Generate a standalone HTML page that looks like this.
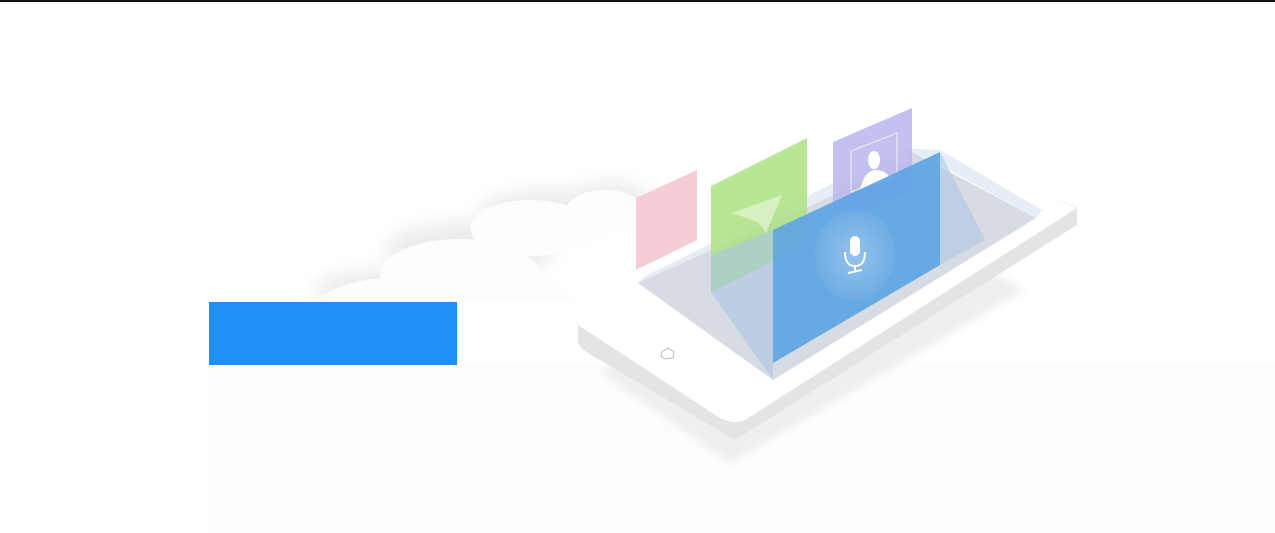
<!DOCTYPE html>
<html><head><meta charset="utf-8"><style>
html,body{margin:0;padding:0;width:1275px;height:533px;overflow:hidden;background:#fff;font-family:"Liberation Sans",sans-serif}
</style></head><body>
<svg width="1275" height="533" viewBox="0 0 1275 533" xmlns="http://www.w3.org/2000/svg" style="display:block">
<defs>
<filter id="blur8" x="-50%" y="-50%" width="200%" height="200%"><feGaussianBlur stdDeviation="9"/></filter>
<filter id="blur4" x="-50%" y="-50%" width="200%" height="200%"><feGaussianBlur stdDeviation="4"/></filter>
<radialGradient id="glow" cx="0.5" cy="0.5" r="0.5"><stop offset="0" stop-color="#fff" stop-opacity="0.3"/><stop offset="1" stop-color="#fff" stop-opacity="0.05"/></radialGradient>
</defs>
<rect x="0" y="0" width="1275" height="2" fill="#111"/>
<rect x="208" y="365" width="1067" height="168" fill="#fdfdfd"/>
<!-- clouds shadow -->
<g filter="url(#blur8)" fill="#ececec">
<ellipse cx="545" cy="212" rx="65" ry="22"/>
<ellipse cx="470" cy="250" rx="85" ry="28"/>
<ellipse cx="390" cy="290" rx="75" ry="20"/>
<ellipse cx="610" cy="198" rx="40" ry="16"/>
</g>
<g fill="#fdfdfd">
<ellipse cx="530" cy="228" rx="60" ry="28"/>
<ellipse cx="605" cy="212" rx="40" ry="22"/>
<ellipse cx="460" cy="275" rx="80" ry="36"/>
<ellipse cx="395" cy="312" rx="82" ry="34"/>
<ellipse cx="530" cy="312" rx="50" ry="32"/>
</g>
<rect x="300" y="300" width="300" height="65" fill="#fff"/>
<!-- phone shadow -->
<polygon points="600,372 730,463 1025,290 900,220" fill="#efefef" filter="url(#blur4)"/>
<!-- phone edge -->
<path d="M578,325 L578,342 Q580,350 600,360 L735,440 L1077,225 L1077,207 L930,150 Z" fill="#e4e4e6"/>
<!-- phone top -->
<path d="M578,325 Q580,315 600,305 L920,140 L1077,208 L745,420 Q735,425 720,418 Z" fill="#fff"/>
<!-- screen -->
<polygon points="638,283 773,380 1036,218 905,148" fill="#d7dce4"/>
<polygon points="905,148 940,150 1042,210 1036,218 940,165" fill="#e6edf6"/>
<polygon points="638,283 645,276 905,148 912,160" fill="#e6edf6"/>
<!-- home button -->
<polygon points="662,352 668,348 674,352 673,358 665,359 661,356" fill="none" stroke="#bbb" stroke-width="1"/>
<!-- pink card -->
<polygon points="636,198 697,170 697,240 636,270" fill="#f5c7d1" opacity="0.9"/>
<!-- green card -->
<polygon points="711,186 807,138 807,245 711,292" fill="#ade283" opacity="0.85"/>
<polygon points="732,213 782,195 766,233 758,222" fill="#e6f5d7" opacity="0.7"/>
<!-- purple card -->
<polygon points="833,142 912,108 912,190 833,225" fill="#b8b6ec" opacity="0.85"/>
<polygon points="851,151 897,133 897,175 851,192" fill="none" stroke="#eee" stroke-width="1"/>
<ellipse cx="874" cy="160" rx="6" ry="9" fill="#fff"/>
<path d="M860,190 Q864,172 874,170 Q886,170 890,178 L890,180 Z" fill="#fff"/>
<!-- blue projection -->
<polygon points="711,292 773,380 773,230 711,255" fill="#a9c4e2" opacity="0.6"/>
<polygon points="940,152 985,240 940,265" fill="#a9c4e2" opacity="0.55"/>
<!-- blue card -->
<polygon points="773,230 940,152 940,265 773,363" fill="#5fa5e3" opacity="0.93"/>
<ellipse cx="855" cy="255" rx="40" ry="45" fill="url(#glow)"/>
<rect x="850" y="236" width="10" height="20" rx="5" fill="#fff"/>
<path d="M845,252 Q845,266 855,266 Q865,266 865,252" fill="none" stroke="#fff" stroke-width="2"/>
<line x1="855" y1="266" x2="855" y2="272" stroke="#fff" stroke-width="2"/>
<line x1="848" y1="273" x2="862" y2="270" stroke="#fff" stroke-width="2"/>
<!-- blue button -->
<rect x="209" y="302" width="248" height="63" fill="#1e90f5"/>
</svg>
</body></html>
